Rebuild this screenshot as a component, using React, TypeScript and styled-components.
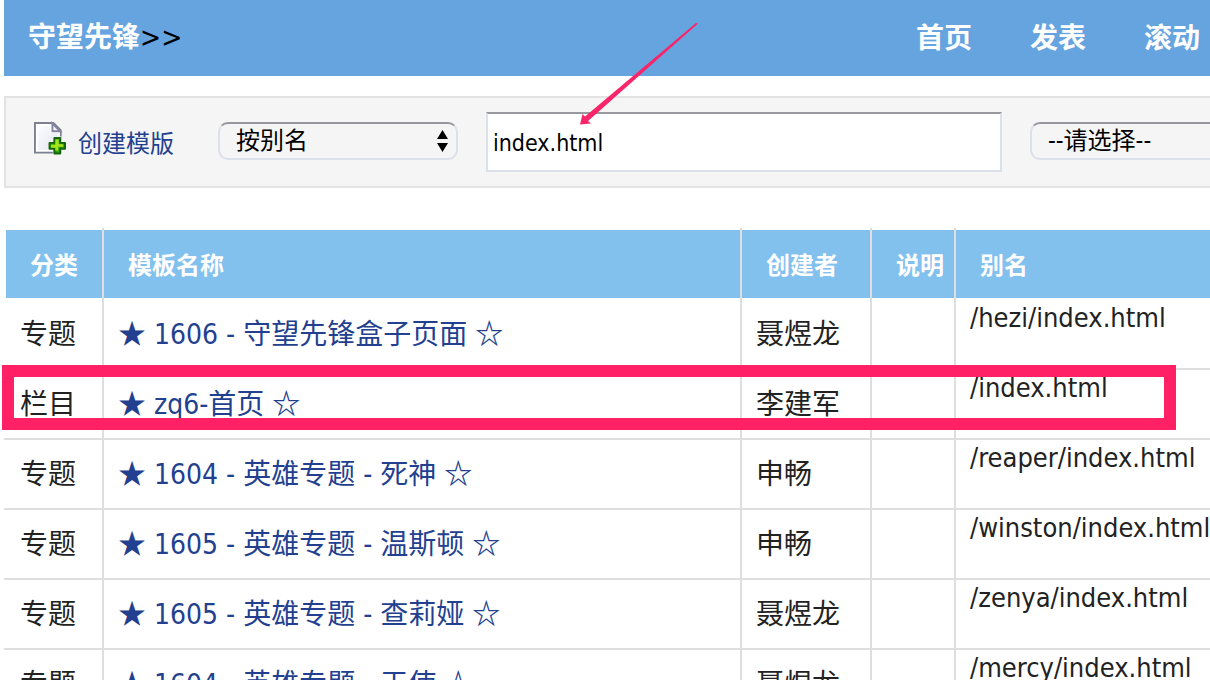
import React from "react";
import styled, { createGlobalStyle } from "styled-components";

const GlobalStyle = createGlobalStyle`
  *, *::before, *::after { box-sizing: border-box; }
  body { margin: 0; background: #fff; }
  body, button, input, select {
    font-family: "DejaVu Sans Condensed", "Noto Sans CJK SC", sans-serif;
  }
`;

const Page = styled.div`
  height: 100vh;
  overflow: hidden;
  padding-left: 4px;
  color: #222;
  font-size: 28px;
`;

const Header = styled.header`
  display: flex;
  align-items: center;
  justify-content: space-between;
  height: 76px;
  padding: 2px 10px 0 24px;
  background: #66a4e0;
`;

const Crumb = styled.div`
  color: #000;
  line-height: 36px;
  padding-bottom: 2px;
`;

const HeaderLink = styled.a`
  color: #fff;
  font-weight: bold;
  line-height: 36px;
  text-decoration: none;
`;

const Nav = styled.nav`
  display: flex;
  gap: 58px;
`;

const Toolbar = styled.form`
  display: flex;
  align-items: center;
  height: 92px;
  margin-top: 20px;
  padding-left: 28px;
  border: 2px solid #e3e3e3;
  border-right: 0;
  background: #f5f5f5;
  font-size: 24px;
`;

const CreateLink = styled.a`
  display: flex;
  align-items: center;
  gap: 12px;
  margin-right: 44px;
  padding-top: 4px;
  color: #233f8f;
  line-height: 32px;
  white-space: nowrap;
  text-decoration: none;

  svg { margin-bottom: 12px; }
`;

const SelectBox = styled.div<{ $bleed?: boolean }>`
  position: relative;
  flex: none;
  width: 240px;
  margin-right: ${(p) => (p.$bleed ? "-60px" : "0")};
  margin-bottom: 2px;

  svg {
    position: absolute;
    top: 8px;
    right: 10px;
    pointer-events: none;
  }
`;

const Select = styled.select`
  display: block;
  appearance: none;
  width: 100%;
  height: 38px;
  padding: 0 16px;
  border: 2px solid #dce0e8;
  border-top-color: #98989e;
  border-radius: 10px;
  background: #f5f5f5;
  color: #000;
  font-size: 24px;
  line-height: 32px;
`;

const SearchBox = styled.div`
  position: relative;
  flex: 1;
  min-width: 0;
  margin: 0 28px;
`;

const SearchInput = styled.input`
  display: block;
  width: 100%;
  height: 60px;
  padding: 2px 5px 0;
  border: 2px solid #dce0e8;
  border-top-color: #98989e;
  border-radius: 0;
  background: #fff;
  color: #000;
  font-size: 23px;
`;

const Pointer = styled.svg`
  position: absolute;
  left: 92px;
  top: -92px;
  z-index: 2;
  pointer-events: none;
`;

const Table = styled.table`
  width: 100%;
  margin-top: 40px;
  table-layout: fixed;
  border-collapse: separate;
  border-spacing: 0;
`;

const Col = styled.col<{ $width?: number }>`
  width: ${(p) => (p.$width ? `${p.$width}px` : "auto")};
`;

const HeadCell = styled.th`
  height: 72px;
  padding: 4px 0 0 24px;
  border-right: 2px solid #dedede;
  background: linear-gradient(#82c1ee, #82c1ee) 0 2px / 100% 68px no-repeat;
  color: #fff;
  font-size: 24px;
  line-height: 32px;
  text-align: left;
  white-space: nowrap;

  &:first-child {
    padding-left: 26px;
    background-position: 2px 2px;
  }
  &:last-child { border-right: 0; }
`;

const Row = styled.tr`
  position: relative;
`;

const Cell = styled.td`
  height: 70px;
  padding: 2px 0 0 14px;
  border-right: 2px solid #dedede;
  border-bottom: 2px solid #dedede;
  line-height: 40px;
  white-space: nowrap;

  &:first-child { padding-left: 16px; }
`;

const AliasCell = styled(Cell)`
  padding-top: 0;
  border-right: 0;
  font-size: 27px;
  line-height: 36px;
  vertical-align: top;
`;

const TemplateLink = styled.a`
  color: #233f8f;
  text-decoration: none;
`;

const Star = styled.span`
  font-family: "Noto Sans CJK SC", sans-serif;
  font-weight: bold;
  line-height: 28px;
`;

const Highlight = styled.div`
  position: absolute;
  top: -5px;
  right: 34px;
  bottom: 10px;
  left: -2px;
  z-index: 1;
  border: 12px solid #ff2066;
  pointer-events: none;
`;

const rows = [
  { kind: "专题", name: "1606 - 守望先锋盒子页面", author: "聂煜龙", alias: "/hezi/index.html" },
  { kind: "栏目", name: "zq6-首页", author: "李建军", alias: "/index.html", marked: true },
  { kind: "专题", name: "1604 - 英雄专题 - 死神", author: "申畅", alias: "/reaper/index.html" },
  { kind: "专题", name: "1605 - 英雄专题 - 温斯顿", author: "申畅", alias: "/winston/index.html" },
  { kind: "专题", name: "1605 - 英雄专题 - 查莉娅", author: "聂煜龙", alias: "/zenya/index.html" },
  { kind: "专题", name: "1604 - 英雄专题 - 天使", author: "聂煜龙", alias: "/mercy/index.html" },
];

const PageAddIcon = () => (
  <svg width="32" height="34" viewBox="0 0 33 34" aria-hidden="true">
    <defs>
      <linearGradient id="paper" x1="0" y1="0" x2="1" y2="1">
        <stop offset="0" stopColor="#fff" />
        <stop offset="1" stopColor="#dfe4f0" />
      </linearGradient>
    </defs>
    <path d="M1 1.500H20L27.500 9V32H1Z" fill="url(#paper)" stroke="#7c8090" strokeWidth="2" />
    <path d="M3 3.500H18V11H25.500V30H3Z" fill="none" stroke="#fff" strokeWidth="2" />
    <path d="M19 2V10H27Z" fill="#f4f4fb" stroke="#8484a4" strokeWidth="2" />
    <path d="M21 17H27V22H32V28H27V33H21V28H16V22H21Z" fill="#2f9a06" stroke="#f5f5f5" strokeWidth="3" />
    <path d="M21 17H27V22H32V28H27V33H21V28H16V22H21Z" fill="#35a508" stroke="#14640a" strokeWidth="2" strokeLinejoin="round" />
    <path d="M22 18.500H25.500V23.500H30V26H25V30H22V27H17.500V24H22Z" fill="#a4e41c" />
  </svg>
);

const Arrows = () => (
  <svg width="11" height="22" viewBox="0 0 11 22" aria-hidden="true">
    <path d="M5.500 0L11 9H0ZM5.500 22L0 13H11Z" fill="#000" />
  </svg>
);

export default function App() {
  return (
    <>
      <GlobalStyle />
      <Page>
        <Header>
          <Crumb>
            <HeaderLink href="#site">守望先锋</HeaderLink>&gt;&gt;
          </Crumb>
          <Nav>
            <HeaderLink href="#home">首页</HeaderLink>
            <HeaderLink href="#publish">发表</HeaderLink>
            <HeaderLink href="#scroll">滚动</HeaderLink>
          </Nav>
        </Header>

        <Toolbar>
          <CreateLink href="#create">
            <PageAddIcon />
            创建模版
          </CreateLink>
          <SelectBox>
            <Select aria-label="搜索方式">
              <option>按别名</option>
            </Select>
            <Arrows />
          </SelectBox>
          <SearchBox>
            <SearchInput type="text" aria-label="关键字" defaultValue="index.html" />
            <Pointer width="122" height="106" viewBox="0 0 122 106" aria-hidden="true">
              <path
                d="M2 104.500L4.500 94L7 96.500L118 3Q120 2 119.500 4L10 101L13 103.500Z"
                fill="#f9256a"
              />
            </Pointer>
          </SearchBox>
          <SelectBox $bleed>
            <Select aria-label="分类">
              <option>--请选择--</option>
            </Select>
            <Arrows />
          </SelectBox>
        </Toolbar>

        <Table>
          <colgroup>
            <Col $width={100} />
            <Col />
            <Col $width={130} />
            <Col $width={84} />
            <Col $width={254} />
          </colgroup>
          <thead>
            <tr>
              <HeadCell>分类</HeadCell>
              <HeadCell>模板名称</HeadCell>
              <HeadCell>创建者</HeadCell>
              <HeadCell>说明</HeadCell>
              <HeadCell>别名</HeadCell>
            </tr>
          </thead>
          <tbody>
            {rows.map((row) => (
              <Row key={row.alias}>
                <Cell>
                  {row.kind}
                  {row.marked && <Highlight />}
                </Cell>
                <Cell>
                  <TemplateLink href={`#${row.alias}`}>
                    <Star>★</Star> {row.name} <Star>☆</Star>
                  </TemplateLink>
                </Cell>
                <Cell>{row.author}</Cell>
                <Cell />
                <AliasCell>{row.alias}</AliasCell>
              </Row>
            ))}
          </tbody>
        </Table>
      </Page>
    </>
  );
}
